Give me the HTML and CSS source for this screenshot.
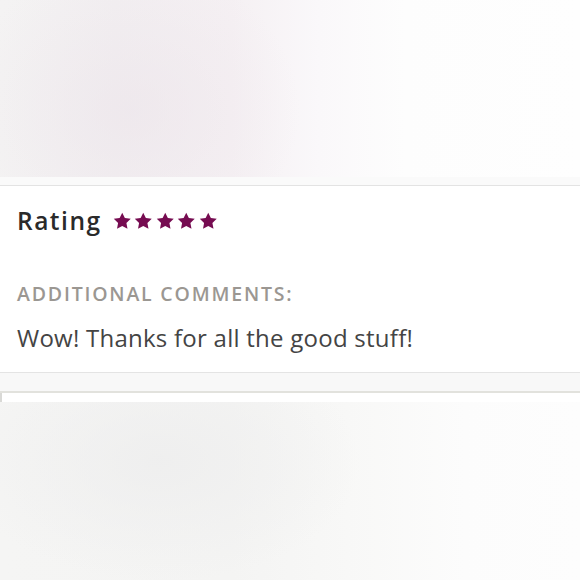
FILE: index.html
```html
<!DOCTYPE html>
<html>
<head>
<meta charset="utf-8">
<link rel="stylesheet" href="styles.css">
</head>
<body>
<div class="page">
  <div class="blur-top"></div>
  <div class="band"></div>
  <section class="review">
    <div class="rating-row">
      <h2 class="rating-title">Rating</h2>
      <div class="stars">
        <svg class="star" viewBox="0 0 24 24"><path d="M12 1l3.4 6.9 7.6 1-5.6 5.3 1.4 7.6L12 18.2l-6.8 3.6 1.4-7.6L1 8.9l7.6-1z"/></svg>
        <svg class="star" viewBox="0 0 24 24"><path d="M12 1l3.4 6.9 7.6 1-5.6 5.3 1.4 7.6L12 18.2l-6.8 3.6 1.4-7.6L1 8.9l7.6-1z"/></svg>
        <svg class="star" viewBox="0 0 24 24"><path d="M12 1l3.4 6.9 7.6 1-5.6 5.3 1.4 7.6L12 18.2l-6.8 3.6 1.4-7.6L1 8.9l7.6-1z"/></svg>
        <svg class="star" viewBox="0 0 24 24"><path d="M12 1l3.4 6.9 7.6 1-5.6 5.3 1.4 7.6L12 18.2l-6.8 3.6 1.4-7.6L1 8.9l7.6-1z"/></svg>
        <svg class="star" viewBox="0 0 24 24"><path d="M12 1l3.4 6.9 7.6 1-5.6 5.3 1.4 7.6L12 18.2l-6.8 3.6 1.4-7.6L1 8.9l7.6-1z"/></svg>
      </div>
    </div>
    <div class="comments-label">ADDITIONAL COMMENTS:</div>
    <p class="comments-text">Wow! Thanks for all the good stuff!</p>
  </section>
  <div class="band band-bottom"></div>
  <div class="strip"></div>
  <div class="blur-bottom"></div>
</div>
</body>
</html>
```
FILE: styles.css
```css
* { box-sizing: border-box; }
html, body { margin: 0; padding: 0; }
body {
  width: 580px;
  height: 580px;
  overflow: hidden;
  font-family: "Open Sans", Lato, sans-serif;
  background: #fff;
}
.page { display: flex; flex-direction: column; }
.blur-top {
  height: 177px;
  background:
    radial-gradient(ellipse 170px 150px at 130px 110px, rgba(236,228,234,0.6), rgba(255,255,255,0) 100%),
    linear-gradient(90deg, #f4f3f3 0%, #f2eff1 20%, #f5f0f3 40%, #faf8fa 55%, #fdfdfd 70%, #fefefe 100%);
}
.band {
  height: 9px;
  background: #fafafa;
  border-bottom: 1px solid #e3e3e3;
}
.review {
  background: #fff;
  padding: 20px 17px 0;
  height: 186px;
}
.rating-row {
  display: flex;
  align-items: center;
  gap: 12px;
}
.rating-title {
  margin: 0;
  font-size: 24.5px;
  font-weight: 600;
  color: #2a2a2a;
  line-height: 30px;
  letter-spacing: 1.5px;
}
.stars { display: flex; gap: 3px; margin-left: -1px; }
.star { width: 18.5px; height: 18.5px; fill: #760c51; }
.comments-label {
  margin-top: 46px;
  font-size: 19.5px;
  font-weight: 600;
  color: #9b9792;
  letter-spacing: 1.8px;
  line-height: 24px;
}
.comments-text {
  margin: 17px 0 0;
  font-size: 24px;
  color: #444;
  line-height: 30px;
  letter-spacing: 0.25px;
}
.band-bottom {
  height: 21px;
  background: #f8f8f8;
  border-top: 1px solid #e4e4e4;
  border-bottom: 2px solid #e2e2dd;
}
.strip {
  height: 9px;
  background: #fff;
  border-left: 2px solid #d9d9d6;
}
.blur-bottom {
  height: 178px;
  background:
    radial-gradient(ellipse 200px 120px at 160px 60px, rgba(238,238,238,0.9), rgba(255,255,255,0) 100%),
    linear-gradient(90deg, #f5f5f4 0%, #f4f4f3 40%, #f8f8f7 60%, #fcfcfc 80%, #fdfdfd 100%);
}
```
